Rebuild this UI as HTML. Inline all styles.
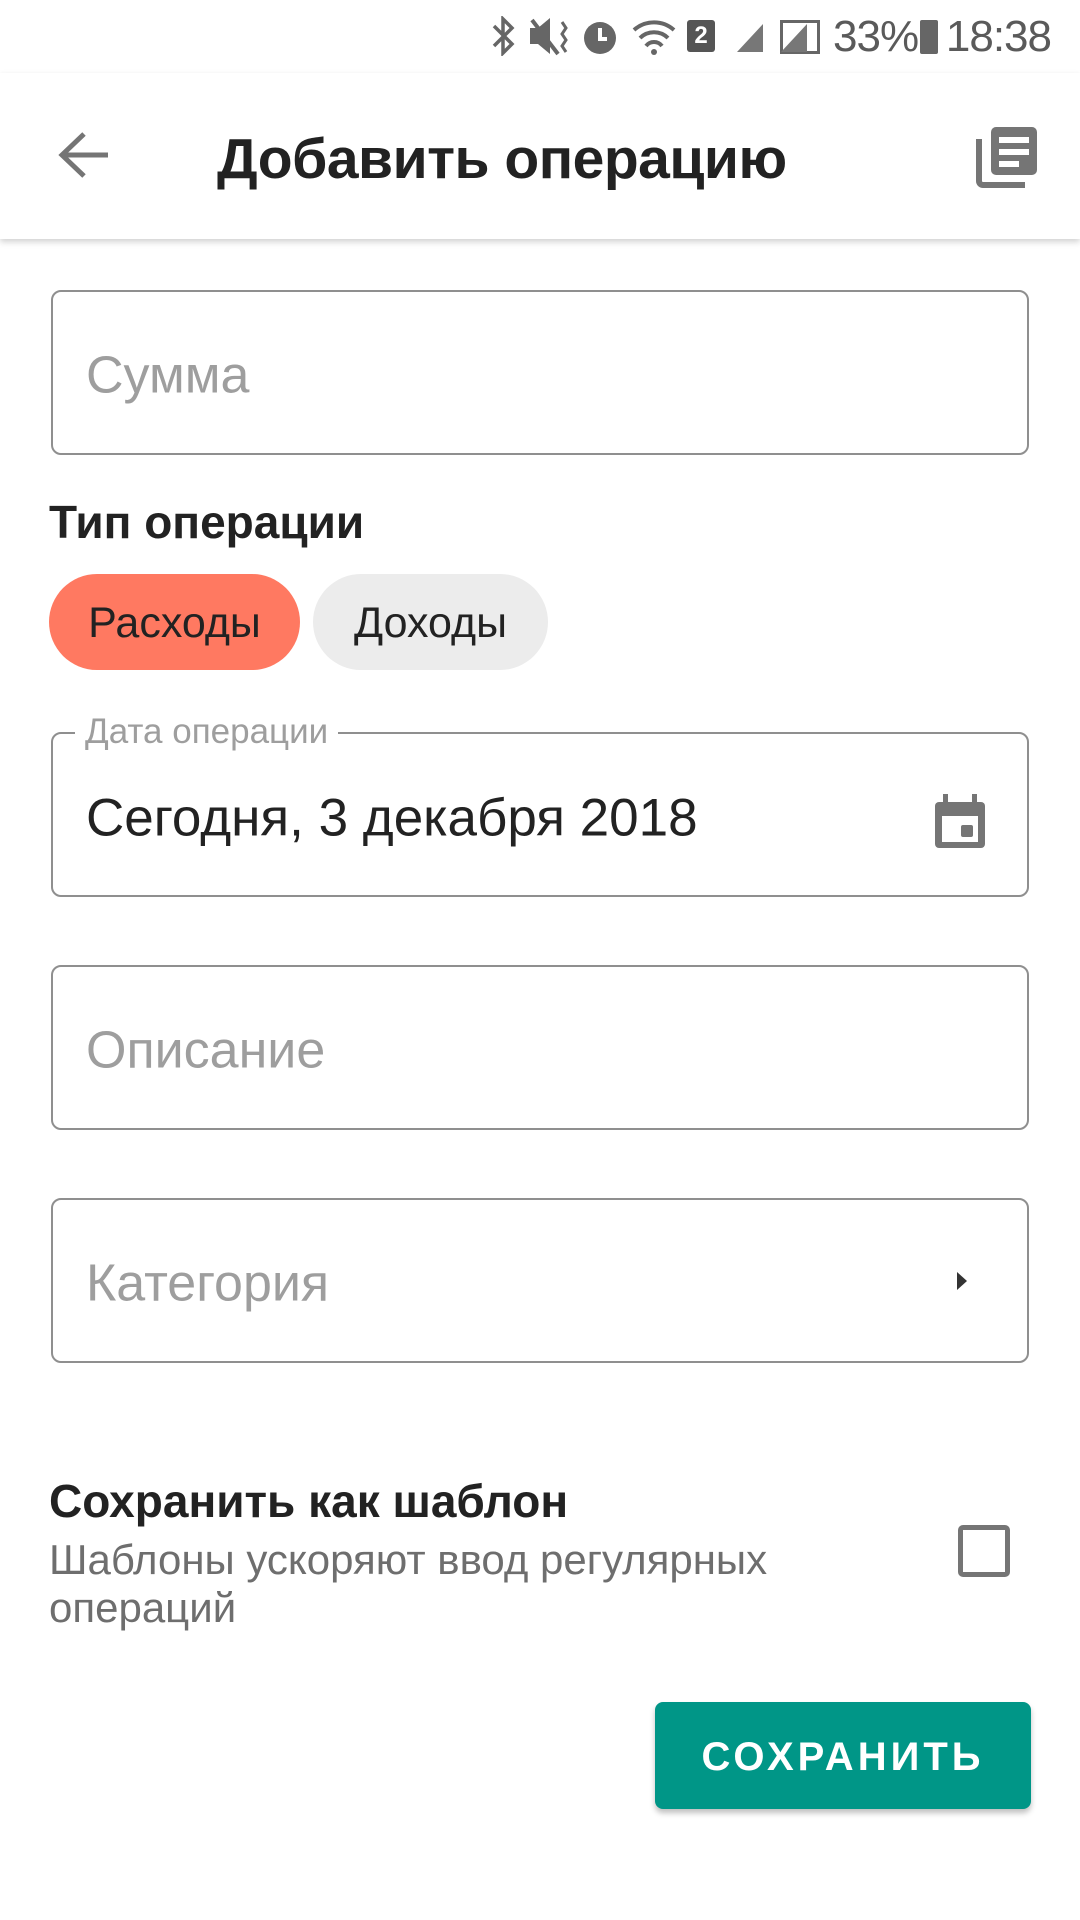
<!DOCTYPE html>
<html><head><meta charset="utf-8"><style>
*{margin:0;padding:0;box-sizing:border-box}
body{width:1080px;height:1920px;background:#fff;font-family:"Liberation Sans","Noto Sans CJK SC",sans-serif;position:relative;overflow:hidden}
.a{position:absolute;white-space:nowrap}
.f{position:absolute;left:51px;width:978px;height:165px;border:2.5px solid #8f8f8f;border-radius:10px}
.ph{position:absolute;left:33px;top:50%;transform:translateY(-46%);font-size:52px;color:#9e9e9e}
</style></head><body>
<!-- status bar -->
<div class="a" style="right:29px;top:12px;font-size:44px;color:#5a5a5a;letter-spacing:-1px">18:38</div>
<div class="a" style="left:833px;top:12px;font-size:44px;color:#5a5a5a;letter-spacing:-1px">33%</div>
<div class="a" style="left:920px;top:20px;width:18px;height:34px;background:#666;border-radius:2px"></div>
<div class="a" style="left:780px;top:20px;width:40px;height:34px;border:3px solid #666"></div>
<svg class="a" style="left:735px;top:20px" width="80" height="34"><path d="M2 32 L28 4 L28 32Z M46 32 L72 4 L72 32Z" fill="#777"/></svg>
<div class="a" style="left:687px;top:20px;width:28px;height:32px;background:#555;border-radius:3px;color:#fff;font-size:24px;font-weight:bold;text-align:center;line-height:32px">2</div>
<svg class="a" style="left:630px;top:16px" width="50" height="40"><path d="M4 14 A30 30 0 0 1 44 14 M10 22 A20 20 0 0 1 38 22 M16 30 A10 10 0 0 1 32 30" stroke="#666" stroke-width="4" fill="none"/><circle cx="24" cy="36" r="3" fill="#666"/></svg>
<svg class="a" style="left:578px;top:14px" width="44" height="44"><circle cx="22" cy="24" r="16" fill="#666"/><path d="M22 14v11h7" stroke="#fff" stroke-width="4" fill="none"/></svg>
<svg class="a" style="left:528px;top:16px" width="44" height="40"><path d="M2 12h8l12-10v36l-12-10h-8z" fill="#666"/><path d="M4 4l26 34" stroke="#666" stroke-width="4"/><path d="M34 6l4 6-4 6 4 6-4 6 4 6" stroke="#666" stroke-width="3" fill="none"/></svg>
<svg class="a" style="left:490px;top:16px" width="26" height="40"><path d="M4 10l18 18-9 9V3l9 9-18 18" stroke="#666" stroke-width="3.5" fill="none"/></svg>
<!-- app bar -->
<div class="a" style="left:0;top:73px;width:1080px;height:166px;background:#fff;box-shadow:0 3px 6px rgba(0,0,0,.18)"></div>
<svg class="a" style="left:56px;top:130px" width="56" height="50"><path d="M52 25H8 M28 4L6 25l22 21" stroke="#757575" stroke-width="5" fill="none"/></svg>
<div class="a" style="left:217px;top:126px;font-size:57px;font-weight:bold;color:#222;letter-spacing:-0.5px">Добавить операцию</div>
<svg class="a" style="left:975px;top:125px" width="64" height="64"><path d="M4 14v42a4 4 0 0 0 4 4h42" stroke="#757575" stroke-width="6" fill="none"/><rect x="16" y="2" width="46" height="48" rx="5" fill="#757575"/><rect x="24" y="12" width="30" height="6" fill="#fff"/><rect x="24" y="24" width="30" height="6" fill="#fff"/><rect x="24" y="36" width="20" height="6" fill="#fff"/></svg>
<!-- fields -->
<div class="f" style="top:290px"><div class="ph">Сумма</div></div>
<div class="a" style="left:49px;top:495px;font-size:46px;font-weight:bold;color:#222">Тип операции</div>
<div class="a" style="left:49px;top:574px;width:251px;height:96px;border-radius:48px;background:#ff7961;color:#222;font-size:43px;text-align:center;line-height:98px">Расходы</div>
<div class="a" style="left:313px;top:574px;width:235px;height:96px;border-radius:48px;background:#ececec;color:#222;font-size:43px;text-align:center;line-height:98px">Доходы</div>
<div class="f" style="top:732px"><div class="a" style="left:22px;top:-24px;background:#fff;padding:0 10px;font-size:35px;color:#9e9e9e;line-height:44px">Дата операции</div>
<div class="a" style="left:33px;top:50%;transform:translateY(-45%);font-size:53px;color:#222">Сегодня, 3 декабря 2018</div>
<svg class="a" style="left:880px;top:58px" width="56" height="58"><rect x="2" y="10" width="50" height="46" rx="4" fill="#757575"/><rect x="9" y="24" width="36" height="26" fill="#fff"/><rect x="28" y="33" width="12" height="12" rx="2" fill="#757575"/><rect x="10" y="2" width="5" height="10" fill="#757575"/><rect x="39" y="2" width="5" height="10" fill="#757575"/></svg></div>
<div class="f" style="top:965px"><div class="ph">Описание</div></div>
<div class="f" style="top:1198px"><div class="ph">Категория</div>
<svg class="a" style="left:902px;top:70px" width="14" height="22"><path d="M2 2l10 9-10 9z" fill="#333"/></svg></div>
<!-- template -->
<div class="a" style="left:49px;top:1474px;font-size:46px;font-weight:bold;color:#222">Сохранить как шаблон</div>
<div class="a" style="left:49px;top:1536px;font-size:42px;color:#6e6e6e;line-height:48px">Шаблоны ускоряют ввод регулярных<br>операций</div>
<div class="a" style="left:958px;top:1525px;width:52px;height:52px;border:5px solid #757575;border-radius:5px"></div>
<div class="a" style="left:655px;top:1702px;width:376px;height:107px;background:#009687;border-radius:8px;box-shadow:0 4px 6px rgba(0,0,0,.25);color:#fff;font-size:40px;text-align:center;line-height:110px;letter-spacing:4px;font-weight:bold">СОХРАНИТЬ</div>
</body></html>
